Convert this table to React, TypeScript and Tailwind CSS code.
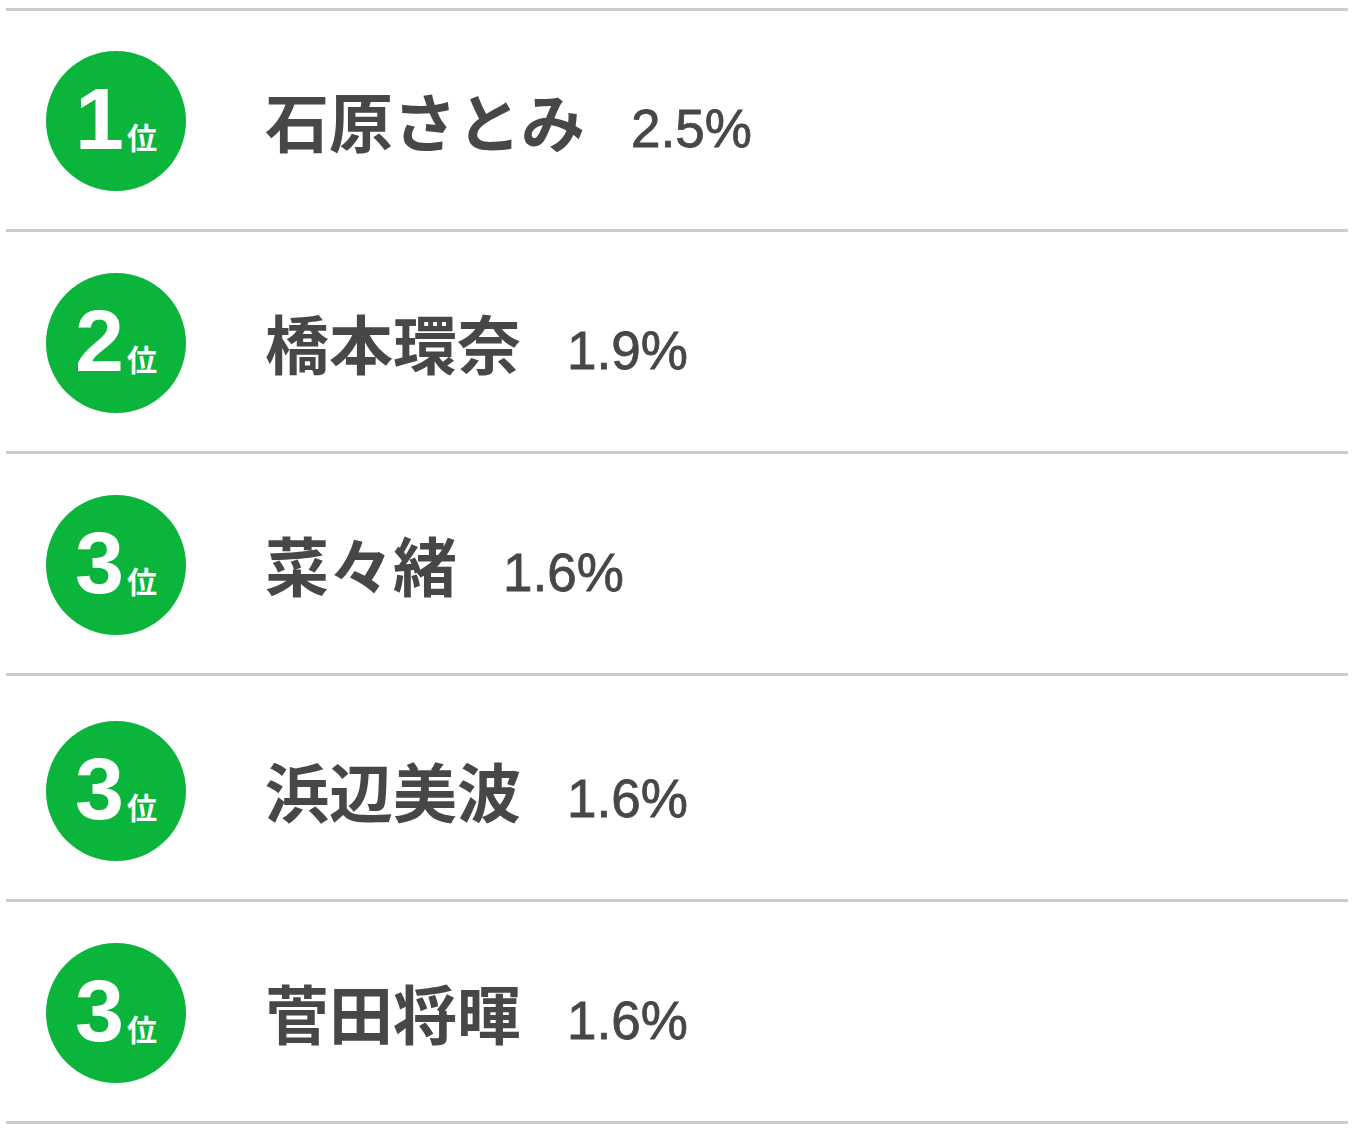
import React from "react";

const rows = [
  { rank: "1", name: "石原さとみ", pct: "2.5%", pt: "pt-[40px]" },
  { rank: "2", name: "橋本環奈", pct: "1.9%", pt: "pt-[41px]" },
  { rank: "3", name: "菜々緒", pct: "1.6%", pt: "pt-[41px]" },
  { rank: "3", name: "浜辺美波", pct: "1.6%", pt: "pt-[45px]" },
  { rank: "3", name: "菅田将暉", pct: "1.6%", pt: "pt-[41px]" },
];

const App: React.FC = () => {
  return (
    <div className="min-h-screen bg-white px-[6px] pt-[8px]">
      <ul>
        {rows.map((r, i) => (
          <li
            key={i}
            className={`flex items-center border-t-[3px] border-[#cccccc] pb-[38px] pl-[40px] ${r.pt}`}
          >
            {/* rank badge */}
            <div className="flex h-[140px] w-[140px] shrink-0 items-baseline justify-center rounded-full bg-[#0bb53c] pt-[36px] text-white">
              <span className="font-['Liberation_Sans',sans-serif] text-[88px] font-bold leading-[64px]">
                {r.rank}
              </span>
              <span className="ml-[3px] font-['Noto_Sans_CJK_JP',sans-serif] text-[30px] font-bold leading-none">
                位
              </span>
            </div>

            <div className="ml-[79px] flex items-baseline text-[#474747]">
              <span className="font-['Noto_Sans_CJK_JP',sans-serif] text-[64px] font-bold leading-none">
                {r.name}
              </span>
              <span className="ml-[46px] font-['Liberation_Sans',sans-serif] text-[53px] leading-none [-webkit-text-stroke:0.8px_#474747]">
                {r.pct}
              </span>
            </div>
          </li>
        ))}
      </ul>
      <div className="border-t-[3px] border-[#cccccc]" />
    </div>
  );
};

export default App;
